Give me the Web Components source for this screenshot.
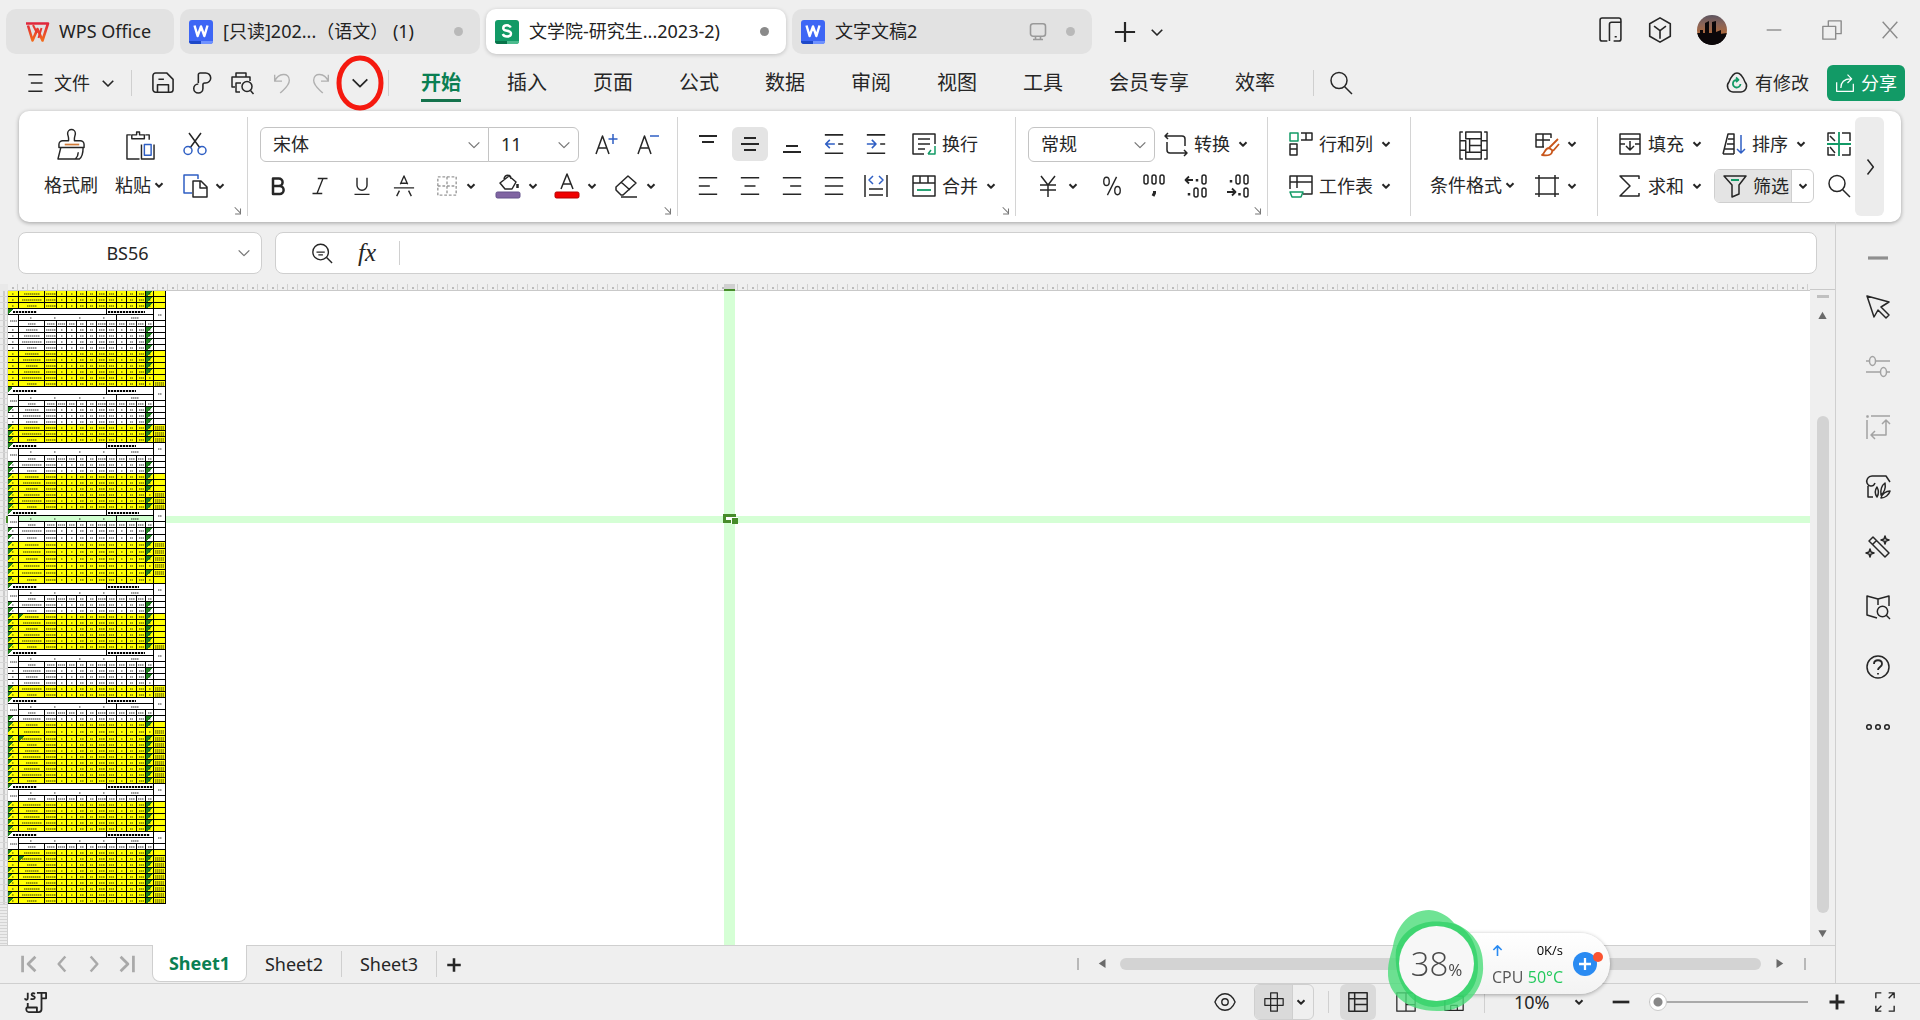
<!DOCTYPE html>
<html lang="zh-CN">
<head>
<meta charset="utf-8">
<title>WPS Office</title>
<style>
html,body{margin:0;height:100%}
body{font:18px/24px "Noto Sans","Noto Sans CJK SC",sans-serif;color:#262626;background:#efefef;overflow:hidden}
</style>
</head>
<body>
<wps-app></wps-app>
<script>
const BASE = `*{box-sizing:border-box}button,select,input{font:inherit;color:inherit;border:0;background:none;padding:0;margin:0;outline:0}button{cursor:pointer}select{appearance:none}`;
const define = (name, html, init) => {
  const tpl = document.createElement('template');
  customElements.define(name, class extends HTMLElement {
    connectedCallback() {
      if (this.shadowRoot) return;
      const root = this.attachShadow({ mode: 'open' });
      tpl.innerHTML = `<style>${BASE}</style>` + (typeof html === 'function' ? html(this) : html);
      root.append(tpl.content.cloneNode(true));
      if (init) init(this, root);
    }
  });
};

const B = '#2f5fc4', G = '#129a66';
const ICONS = {
  chev: '<path d="M6 9l6 6 6-6" stroke-width="3.4"/>',
  chevSoft: '<path d="M5 9l7 7 7-7" stroke-width="2.2"/>',
  chevThin: '<path d="M4 8l8 8 8-8" stroke-width="1.900"/>',
  chevRight: '<path d="M9 3l7 9-7 9" stroke-width="1.8"/>',
  logo: '<defs><linearGradient id="g" x2="0" y2="1"><stop stop-color="#e0263c"/><stop offset="1" stop-color="#f26a1b"/></linearGradient></defs><path d="M1 3.500H23L17.500 20.500L12.500 9L7.500 20.500L3 5.500" stroke="url(#g)" stroke-width="2.600"/><path d="M8 5L12 13M16.500 8L13.500 18" stroke="#e63a30" stroke-width="2"/>',
  word: '<rect width="24" height="24" rx="3" fill="#3d66f5" stroke="none"/><path d="M0 21h12v3H3a3 3 0 0 1-3-3z" fill="#1d48c9" stroke="none"/><path d="M12 21h12a3 3 0 0 1-3 3h-9z" fill="#6f92ff" stroke="none"/><path d="M5.500 5.500L8.600 16L12 6.500L15.400 16L18.500 5.500" stroke="#fff" stroke-width="2.400"/>',
  sheet: '<rect width="24" height="24" rx="3" fill="#129a66" stroke="none"/><path d="M0 21h12v3H3a3 3 0 0 1-3-3z" fill="#08744a" stroke="none"/><path d="M12 21h12a3 3 0 0 1-3 3h-9z" fill="#4cbb8e" stroke="none"/><path d="M15.800 7.500C15 5.800 13.500 5.300 12 5.300C9.800 5.300 8.200 6.400 8.200 8.200C8.200 12 16 9.500 16 13.500C16 15.400 14.200 16.500 12 16.500C10 16.500 8.400 15.700 7.800 14" stroke="#fff" stroke-width="2.400"/>',
  monitor: '<rect x="3" y="2" width="18" height="15" rx="3" stroke-width="1.900"/><path d="M9 17v3M15 17v3M6 21h12" stroke-width="1.900"/>',
  plus: '<path d="M12 1v22M1 12h22" stroke-width="2.400"/>',
  plusBold: '<path d="M12 3v18M3 12h18" stroke-width="3.400"/>',
  minusBold: '<path d="M2 12h20" stroke-width="3.200"/>',
  phone: '<path d="M9 23H4a2 2 0 0 1-2-2V3a2 2 0 0 1 2-2h16a2 2 0 0 1 2 2v2"/><path d="M11 23V7a2 2 0 0 1 2-2h9v16a2 2 0 0 1-2 2h-5M16 19h2"/>',
  cube: '<path d="M12 .8l9.500 5.500v11.400L12 23.200l-9.500-5.500V6.300zM12 20v-7.500M6.500 8.500l5.500 4 5.500-4"/>',
  min: '<path d="M4 12h16"/>',
  restore: '<path d="M2 8h14v14H2zM8 8V2h14v14h-6"/>',
  close: '<path d="M4 3l16 18M20 3L4 21"/>',
  burger: '<path d="M4 2h17M7 12h14M4 22h17" stroke-width="1.800"/>',
  save: '<path d="M8 22H4a3 3 0 0 1-3-3V4a3 3 0 0 1 3-3h12l7 7v11a3 3 0 0 1-3 3H6M6 22v-8h12v8M7 8h6" stroke-width="1.700"/>',
  link: '<path d="M8 12V3a2 2 0 0 1 2-2h6a5.500 5.500 0 0 1 0 11h-1a2 2 0 0 0-2 2v4a5 5 0 1 1-5-5" stroke-width="1.700"/>',
  print: '<path d="M6 6V2h10v4M5 16H2V6h18v4M11 12H6v9h4"/><circle cx="17" cy="15.500" r="5"/><path d="M20.500 19.500l3 3.500"/>',
  undo: '<path d="M4 3v7h8M4 10C8 1 20 0 20 9c0 6-5 9-10 14"/>',
  redo: '<path d="M20 3v7h-8M20 10C16 1 4 0 4 9c0 6 5 9 10 14"/>',
  search: '<circle cx="10" cy="9.500" r="8"/><path d="M15.500 15.500l7.500 7.500"/>',
  cloud: `<path d="M8 21a6 6 0 0 1-4-10C6 6 8 2 12 2s6 4 8 9a6 6 0 0 1-4 10z"/><path d="M15.500 13a3.800 3.800 0 1 1-3-4M11 6.500l2.500 2.300L11 11" stroke="${G}" stroke-width="1.800"/>`,
  share: '<path d="M2 11v11h20v-9M7 18c0-8 5-11 12-11M15 2l5 5-5 5"/>',
  brush: '<path d="M12 11C12.500 7 11 6 11 3.500a4 4 0 0 1 8 0C19 6 17.500 7 18 11h6a4 4 0 0 1 4 4v3H2v-3a4 4 0 0 1 4-4zM4 18L1 30h22c3-2 4-6 4-12M22 23c0 3-1 5-3 7" transform="translate(0 -1)"/><path d="M8 14h15" stroke="#d27b38" stroke-width="1.800"/>',
  paste: `<path d="M14 29H1V4h4M20 4h4v5M6 8V4h5V1h3v3h5v4z"/><path d="M16 14V29h13V14" /><path d="M19 14h7v11h-7z" stroke="${B}"/>`,
  cut: `<path d="M6 1l11 15M18 1L7 16"/><circle cx="5" cy="18.500" r="4" stroke="${B}"/><circle cx="19" cy="18.500" r="4" stroke="${B}"/>`,
  copy: `<path d="M9 19H1V1h14v4" stroke="${B}"/><path d="M10 7h8l6 6v10H10zM17 7v7h7"/>`,
  growA: `<path d="M2 22L8.500 4L15 22M4.500 16h8"/><path d="M19 2v10M14.500 7h9" stroke="${B}"/>`,
  shrinkA: `<path d="M2 22L8.500 4L15 22M4.500 16h8"/><path d="M14 4h9" stroke="${B}"/>`,
  bold: '<path d="M6 3h7a4.300 4.300 0 0 1 0 9H6zM6 12h8a4.500 4.500 0 0 1 0 9.500H6z" stroke-width="3"/>',
  italic: '<path d="M9 2h13M2 22h13M16 2L8 22" stroke-width="1.800"/>',
  under: '<path d="M6 2v9a6 6 0 0 0 12 0V2M3 22h18" stroke-width="1.700"/>',
  strike: '<path d="M1 14h22M8 10L12 1l4 9M7 17l-3 6M17 17l3 6M9 9h6"/>',
  borders: '<path d="M2 2h20v20H2zM12 2v20M2 12h20" stroke="#999" stroke-dasharray="3 2"/>',
  fill: '<path d="M4 9l9-7 7 6-4 7H9zM8 5C9 0 15 0 15 5"/><path d="M21.500 10v4" stroke-width="2.500"/><rect x="0" y="18" width="24" height="6" rx="1.500" fill="#8064a2" stroke="#62508a" stroke-width="1"/>',
  colorA: '<path d="M6 15L12 0L18 15M8 10h8"/><rect x="0" y="18" width="24" height="6" rx="1.500" fill="#f00000" stroke="#b50000" stroke-width="1"/>',
  eraser: '<path d="M2 13L14 2l8 7L9 21H7l-5-5zM7 8l9 8M7 23h16"/>',
  vTop: '<path d="M3 4h18M6 10h12" stroke-width="1.900"/>',
  vMid: '<path d="M6 6h12M3 12h18M6 18h12" stroke-width="1.800"/>',
  vBot: '<path d="M6 14h12M3 20h18" stroke-width="1.900"/>',
  outdent: `<path d="M1 1h22M1 23h22M17 12h6" stroke-width="1.900"/><path d="M13 12H2M7 7l-5 5 5 5" stroke="${B}" stroke-width="1.900"/>`,
  indent: `<path d="M1 1h22M1 23h22M17 12h6" stroke-width="1.900"/><path d="M1 12h11M7 7l5 5-5 5" stroke="${B}" stroke-width="1.900"/>`,
  aLeft: '<path d="M2 3h20M2 12h12M2 21h20" stroke-width="1.800"/>',
  aCenter: '<path d="M2 3h20M6 12h12M2 21h20" stroke-width="1.800"/>',
  aRight: '<path d="M2 3h20M10 12h12M2 21h20" stroke-width="1.800"/>',
  aJust: '<path d="M2 3h20M2 12h20M2 21h20" stroke-width="1.800"/>',
  distrib: `<path d="M1 1v22M23 1v22M5 15h14M5 21h14"/><path d="M9 2L5 6l4 4M15 2l4 4-4 4" stroke="${B}"/>`,
  wrap: `<path d="M12 22H1V2h22v10M6 7h12M6 12h12M6 17h7"/><path d="M23 14v8h-7M19 18l-3 4" stroke="${G}"/>`,
  merge: `<path d="M1 2h22v20H1zM1 9h22M8 2v7M16 2v7"/><path d="M5 16h14" stroke="${G}" stroke-width="1.800"/>`,
  convert: '<path d="M1 4h17a3 3 0 0 1 3 3v7M4 1L1 4l3 3M3 10v8a3 3 0 0 0 3 3h17M20 18l3 3-3 3"/>',
  yen: '<path d="M5 2l7 9 7-9M4 11h16M4 16h16M12 11v12"/>',
  percent: '<ellipse cx="6" cy="7" rx="3" ry="4.500"/><ellipse cx="18" cy="17" rx="3" ry="4.500"/><path d="M17 2L7 22"/>',
  thousand: '<rect x="2" y="1" width="4" height="9" rx="2"/><rect x="10" y="1" width="4" height="9" rx="2"/><rect x="18" y="1" width="4" height="9" rx="2"/><path d="M12.500 17v2l-1.500 3" stroke-width="3"/>',
  decAdd: '<path d="M9 6H2M5 2.500L1.500 6 5 9.500" stroke-width="1.800"/><path d="M13 5v2.500" stroke-width="2.500"/><rect x="18" y="1" width="4" height="9" rx="2"/><path d="M5 19v2.500" stroke-width="2.500"/><rect x="10" y="14" width="4" height="9" rx="2"/><rect x="18" y="14" width="4" height="9" rx="2"/>',
  decSub: '<path d="M5 6v2.500" stroke-width="2.500"/><rect x="10" y="1" width="4" height="9" rx="2"/><rect x="18" y="1" width="4" height="9" rx="2"/><path d="M1 18h8M6 14.500L9.500 18 6 21.500" stroke-width="1.800"/><path d="M13.500 19v2.500" stroke-width="2.500"/><rect x="18" y="14" width="4" height="9" rx="2"/>',
  rowcol: `<path d="M12 1h11v7H12M17 1v7M1 12h7v11H1zM1 17h7"/><path d="M1 1h8v8H1z" stroke="${G}"/>`,
  worksheet: `<path d="M1 15V2h22v18h-9M1 8h22M8 2v12"/><path d="M1 18h13l-2 5H3z" stroke="${G}"/>`,
  condfmt: '<path d="M4 1H1v28h3M26 1h3v28h-3M7 1v7h16V1zM7 29v-7h16v7zM11 8v14M23 8v14M11 15h12M1 10h6v12M1 20h6M23 10h6M23 20h6"/>',
  style: '<path d="M9 15H1V2h15v4M1 8h14M8 2v13"/><path d="M23 7l-9 9M24 12l-6 7M14 16c-4 0-4 5-7 7 6 1 11 0 10-5z" stroke="#c8561b" stroke-width="1.800"/>',
  frame: '<path d="M4 1v22M20 1v22M0 4h24M0 20h24"/>',
  fillDown: '<path d="M7 12H2V2h20v10h-5M2 7h20M2 12v10h20V12M12 9v9M8 14l4 4 4-4"/>',
  sort: `<path d="M1 22L6 2h6v20M3 17h9M5 12h7M6 7h6M1 22h11"/><path d="M19 3v18M15 17l4 4 4-4" stroke="${B}"/>`,
  sum: '<path d="M21 5V2H2l10 10L2 22h19v-3"/>',
  filter: `<path d="M1 2h22l-7 9v9l-7 3V11z"/><path d="M8 6h8" stroke="${G}" stroke-width="2"/>`,
  textcol: `<path d="M8 1H1v8M1 15v8h7M15 1h8v8M15 23h8v-8M3 4l5 5M3 15l5 6"/><path d="M0 12h24M12 0v24" stroke="${G}" stroke-width="1.800"/>`,
  launcher: '<path d="M4 3l14 14M18 6v13H5" stroke-width="2.500"/>',
  zoomfx: '<circle cx="10.500" cy="11" r="8.500"/><path d="M17 17l6 6M6 11h9M8 14h5"/>',
  cursor: '<path d="M1 1l22 6-8 5 8 8-3 3-8-8-4 7z"/>',
  sliders: '<path d="M0 6h3M10 6h14M0 17h14M21 17h3"/><ellipse cx="6.500" cy="6" rx="3" ry="4.500"/><ellipse cx="17.500" cy="17" rx="3" ry="4.500"/>',
  rotate: '<path d="M5 1h19M1 5v19M1 1h1v1H1zM20 6v14H6M16 9l4-4 4 4M9 16l-4 4 4 4"/>',
  leaf: '<path d="M24 7l-4-6H6C2 1 0 5 1 8s6 5 8 0M2 11v11h5M11 22c-3-4-2-7 0-10 2 4 2 7 0 10zM15 20c-1-5 1-10 4-12 1 5-1 10-4 12zM15 23c1-4 5-7 9-7-1 4-5 7-9 7z"/>',
  wand: '<path d="M3 6l4-4 16 16-4 4zM7 9l4-4M19 1l1 3 3 1-3 1-1 3-1-3-3-1 3-1zM4 14l1 3 3 1-3 1-1 3-1-3-3-1 3-1z"/>',
  book: '<path d="M11 23L1 20V1l11 3 11-3v10M12 4v6"/><circle cx="16.500" cy="16.500" r="5.200"/><path d="M20 20l4 4"/>',
  help: '<circle cx="12" cy="12" r="11"/><path d="M8 9c0-5 8-5 8 0 0 3-4 3-4 6M12 18v1.500" stroke-width="1.800"/>',
  dots: '<circle cx="3" cy="12" r="2.300"/><circle cx="12" cy="12" r="2.300"/><circle cx="21" cy="12" r="2.300"/>',
  navFirst: '<path d="M5 3v18M19 4l-8 8 8 8" stroke-width="3"/>',
  navPrev: '<path d="M16 3l-8 9 8 9" stroke-width="3"/>',
  navNext: '<path d="M8 3l8 9-8 9" stroke-width="3"/>',
  navLast: '<path d="M19 3v18M5 4l8 8-8 8" stroke-width="3"/>',
  triUp: '<path d="M12 2l11 19H1z" fill="currentColor" stroke="none"/>',
  triDown: '<path d="M12 22L1 3h22z" fill="currentColor" stroke="none"/>',
  triLeft: '<path d="M2 12L20 0v24z" fill="currentColor" stroke="none"/>',
  triRight: '<path d="M22 12L4 0v24z" fill="currentColor" stroke="none"/>',
  script: '<path d="M3 2v6c0 2-3 2-3 0M11 3C7 1 6 5 9 5.500S11 10 6 8.500M13 2h10v6h-5M18 2v18a3 3 0 0 1-3 3H4c-3 0-3-4-2-5h11v5M3 18v-5" stroke-width="2"/>',
  eye: '<path d="M1 12c5-12 17-12 22 0-5 12-17 12-22 0z"/><circle cx="12" cy="12" r="3.500"/>',
  cross: '<path d="M8 8V1h8v7h7v8h-7v7H8v-7H1V8zM8 8h8v8H8z"/>',
  grid: '<path d="M1 1h22v22H1zM1 8h22M8 1v22M8 15h15" stroke-width="1.800"/>',
  page: '<path d="M1 1h22v22H1zM12 1v22M12 15h11"/>',
  page2: '<path d="M1 5h22v17H1zM8 16h8v6M8 22v-6"/>',
  full: '<path d="M8 2H2v6M16 2h6v6M22 2l-6 6M8 22H2v-6M2 22l6-6M16 22h6v-6"/>',
  up: '<path d="M12 24V3M3 11l9-9 9 9" stroke-width="3.500"/>'
};
define('ui-icon', el => {
  const n = el.getAttribute('name'), s = el.getAttribute('size') || 24, v = el.getAttribute('box') || 24;
  return `<style>:host{display:block;flex:none;width:${s}px;height:${s}px}svg{display:block;overflow:visible}</style>
  <svg width="${s}" height="${s}" viewBox="0 0 ${v} ${v}" fill="none" stroke="currentColor" stroke-width="1.500" stroke-linejoin="round" aria-hidden="true">${ICONS[n]}</svg>`;
});

/* toolbar button: icon, optional label, optional drop-down arrow */
define('ui-tool', el => {
  const a = k => el.getAttribute(k);
  const label = a('label') || '', arrow = el.hasAttribute('menu') ? '<ui-icon name="chev" size="14"></ui-icon>' : '';
  const title = a('tip') || label;
  return `<style>
  :host{display:block;flex:none}
  button{display:flex;align-items:center;height:34px;gap:6px;border-radius:6px;white-space:nowrap;width:100%}
  :host([square]) button{justify-content:center;width:36px}
  :host([on]) button{background:#e4e4e4}
  :host([big]) button{flex-direction:column;height:76px;gap:10px;padding-top:4px}
  .row{display:flex;align-items:center;gap:1px;line-height:30px}
  </style><button title="${title}" aria-label="${title}">` + (el.hasAttribute('big')
    ? `<ui-icon name="${a('icon')}" size="29" box="30"></ui-icon><span class="row">${label}${arrow}</span>`
    : `<ui-icon name="${a('icon')}" size="${a('size') || 24}"></ui-icon>${label ? `<span>${label}</span>` : ''}${arrow}`) + `</button>`;
});

define('ui-select', el => `<style>
  :host{display:block;position:relative;height:35px;border:1px solid #c4c4c4;border-radius:6px;background:#fff}
  select{width:100%;height:100%;padding-left:12px;text-overflow:clip}
  ui-icon{position:absolute;right:6px;top:9px;pointer-events:none;color:#777}
  </style><select aria-label="${el.getAttribute('tip')}"><option>${el.getAttribute('value')}</option></select><ui-icon name="chevThin" size="16"></ui-icon>`);

define('doc-tab', el => `<style>
  :host{display:flex;align-items:center;gap:10px;height:45px;width:300px;padding:0 17px 0 9px;border-radius:10px;background:#e2e2e2;color:#222;flex:none}
  :host([home]){width:168px;padding-left:19px}
  :host([active]){background:#fff;box-shadow:0 1px 4px #0003}
  button{flex:1;text-align:left;white-space:nowrap;overflow:hidden;height:45px;padding-bottom:1px}
  i{width:9px;height:9px;border-radius:50%;background:#b9b9b9;margin-left:8px}
  :host([active]) i{background:#8a8a8a}
  :host([home]) i{display:none}
  ui-icon[name=monitor]{color:#999}
  </style><ui-icon name="${el.getAttribute('icon')}"></ui-icon><button role="tab"><slot></slot></button>${el.hasAttribute('screen') ? '<ui-icon name="monitor" size="20"></ui-icon>' : ''}<i></i>`);

define('title-bar', `<style>
  :host{display:flex;align-items:center;gap:6px;padding:9px 19px 0 6px}
  .new{display:flex;align-items:center;gap:12px;margin-left:16px}
  .win{margin-left:auto;display:flex;align-items:center;gap:36px}
  .app{display:flex;align-items:center;gap:24px;margin-bottom:4px}
  .win button{display:block}.sys{display:flex;gap:36px;color:#8b8b8b;margin-bottom:4px}
  .ava svg{display:block}
  </style>
  <doc-tab home icon="logo">WPS Office</doc-tab>
  <doc-tab icon="word">[只读]202...（语文） (1)</doc-tab>
  <doc-tab icon="sheet" active>文学院-研究生...2023-2)</doc-tab>
  <doc-tab icon="word" screen>文字文稿2</doc-tab>
  <div class="new"><button aria-label="新建"><ui-icon name="plus" size="22"></ui-icon></button><button aria-label="标签列表"><ui-icon name="chevSoft" size="18"></ui-icon></button></div>
  <div class="win"><div class="app">
  <button aria-label="手机"><ui-icon name="phone" size="25"></ui-icon></button>
  <button aria-label="应用"><ui-icon name="cube" size="26"></ui-icon></button>
  <button class="ava" aria-label="账户"><svg width="30" height="30" viewBox="0 0 30 30"><defs><linearGradient id="s" x2="0" y2="1"><stop stop-color="#5d5560"/><stop offset=".3" stop-color="#8a6458"/><stop offset=".6" stop-color="#a9683e"/><stop offset=".7" stop-color="#140c0c"/></linearGradient><clipPath id="c"><circle cx="15" cy="15" r="15"/></clipPath></defs><g clip-path="url(#c)"><rect width="30" height="30" fill="url(#s)"/><path d="M0 18h3v-3h3v3h2V8l4-2v12h3V7l4-1v11l5-2v4l6-1v12H0z" fill="#0b0709"/></g></svg></button></div>
  <div class="sys"><button aria-label="最小化"><ui-icon name="min" size="22"></ui-icon></button><button aria-label="还原"><ui-icon name="restore" size="22"></ui-icon></button><button aria-label="关闭"><ui-icon name="close" size="22"></ui-icon></button></div></div>`);

define('menu-bar', `<style>
  :host{display:flex;align-items:center;height:57px;padding:0 15px 0 25px}
  .file{display:flex;align-items:center;gap:9px}
  .sep{width:1px;height:26px;background:#cfcfcf;flex:none}
  .file + .sep{margin-left:14px}
  .quick{display:flex;align-items:center;gap:17px;margin:0 17px 0 20px}
  .quick button{display:block}
  .quick .dim{color:#b0b0b0}
  .more{position:relative}
  .more svg{position:absolute;left:-13px;top:-17px;pointer-events:none}
  nav{display:flex;gap:46px;margin:0 38px 0 32px;font-size:20px;line-height:30px}
  nav a{color:inherit;text-decoration:none;white-space:nowrap;padding:5px 0 4px;background:linear-gradient(#15734d,#15734d) 0 100%/0 3px no-repeat}
  nav a.on{color:#0a7f52;font-weight:700;background-size:100% 3px}
  .find{margin-left:15px}
  .right{margin-left:auto;display:flex;align-items:center;gap:18px}
  .right button{display:flex;align-items:center;gap:6px;white-space:nowrap}
  .right .share{height:36px;width:78px;background:#129a66;color:#fff;border-radius:6px;justify-content:center}
  </style>
  <button class="file"><ui-icon name="burger" size="20"></ui-icon><span>文件</span><ui-icon name="chevSoft" size="18"></ui-icon></button>
  <span class="sep"></span>
  <div class="quick">
  <button aria-label="保存"><ui-icon name="save" size="22"></ui-icon></button>
  <button aria-label="输出"><ui-icon name="link" size="22"></ui-icon></button>
  <button aria-label="打印预览"><ui-icon name="print" size="24"></ui-icon></button>
  <button class="dim" aria-label="撤销"><ui-icon name="undo" size="22"></ui-icon></button>
  <button class="dim" aria-label="恢复"><ui-icon name="redo" size="22"></ui-icon></button>
  <button class="more" aria-label="自定义快速访问"><ui-icon name="chevThin" size="22"></ui-icon><svg width="48" height="56"><ellipse cx="24" cy="28" rx="21" ry="25" fill="none" stroke="#f5190f" stroke-width="5"/></svg></button>
  </div>
  <span class="sep"></span>
  <nav><a href="#" class="on">开始</a><a href="#">插入</a><a href="#">页面</a><a href="#">公式</a><a href="#">数据</a><a href="#">审阅</a><a href="#">视图</a><a href="#">工具</a><a href="#">会员专享</a><a href="#">效率</a></nav>
  <span class="sep"></span><button class="find" aria-label="搜索"><ui-icon name="search"></ui-icon></button>
  <div class="right"><button><ui-icon name="cloud"></ui-icon>有修改</button><button class="share"><ui-icon name="share" size="20"></ui-icon>分享</button></div>`);

define('ribbon-group', el => `<style>
  :host{position:relative;display:flex;flex:none;padding:10px 0 13px 12px;margin:6px 0;height:99px;border-right:1px solid #d4d4d4}
  :host([last]){border:0;flex:1;overflow:hidden}
  .l{position:absolute;right:4px;bottom:0;color:#777}
  </style><slot></slot>${el.hasAttribute('launcher') ? '<button class="l" aria-label="更多设置"><ui-icon name="launcher" size="10"></ui-icon></button>' : ''}`);
define('ribbon-bar', `<style>
  :host{display:flex;margin:0 19px;height:111px;background:#fff;border-radius:10px;box-shadow:0 1px 4px #0005;padding-right:17px}
  .c{display:flex;flex-direction:column;gap:8px}.r{display:flex;align-items:center;height:34px}
  .g{gap:6px}
  .split{display:flex;border:1px solid #cfcfcf;border-radius:6px;width:100px;height:34px;align-items:center;overflow:hidden}
  .split ui-tool{background:#e4e4e4;border-right:1px solid #cfcfcf;padding-left:8px;width:77px}
  .split button{flex:1;display:flex;justify-content:center}
  .next{flex:none;width:29px;height:99px;margin-top:6px;background:#ececec;border-radius:6px;display:flex;align-items:center;justify-content:center}
  .font{width:229px;border-radius:6px 0 0 6px}.size{width:91px;border-radius:0 6px 6px 0;margin-left:-1px}
  </style>
  <ribbon-group launcher style="width:229px;padding-left:25px">
    <ui-tool big icon="brush" label="格式刷"></ui-tool>
    <ui-tool big menu icon="paste" label="粘贴" style="margin:0 17px"></ui-tool>
    <div class="c"><ui-tool icon="cut" tip="剪切"></ui-tool><ui-tool menu icon="copy" tip="复制"></ui-tool></div>
  </ribbon-group>
  <ribbon-group launcher style="width:430px">
    <div class="c"><div class="r"><ui-select class="font" tip="字体" value="宋体"></ui-select><ui-select class="size" tip="字号" value="11"></ui-select>
      <ui-tool square icon="growA" tip="增大字号" style="margin:0 6px 0 9px"></ui-tool><ui-tool square icon="shrinkA" tip="减小字号"></ui-tool></div>
    <div class="r"><ui-tool square icon="bold" size="20" tip="加粗"></ui-tool><ui-tool square icon="italic" size="18" tip="倾斜" style="margin:0 6px"></ui-tool><ui-tool square icon="under" size="20" tip="下划线"></ui-tool><ui-tool square icon="strike" size="22" tip="删除线" style="margin:0 14px 0 6px"></ui-tool>
      <ui-tool menu icon="borders" size="22" tip="边框" style="width:60px"></ui-tool><ui-tool menu icon="fill" tip="填充颜色" style="width:59px"></ui-tool><ui-tool menu icon="colorA" tip="字体颜色" style="width:59px"></ui-tool><ui-tool menu icon="eraser" tip="清除"></ui-tool></div></div>
  </ribbon-group>
  <ribbon-group launcher style="width:338px">
    <div class="c"><div class="r g"><ui-tool square icon="vTop" tip="顶端对齐"></ui-tool><ui-tool square on icon="vMid" tip="垂直居中"></ui-tool><ui-tool square icon="vBot" tip="底端对齐"></ui-tool><ui-tool square icon="outdent" size="20" tip="减少缩进"></ui-tool><ui-tool square icon="indent" size="20" tip="增加缩进"></ui-tool><ui-tool icon="wrap" label="换行" style="margin-left:12px"></ui-tool></div>
    <div class="r g"><ui-tool square icon="aLeft" size="22" tip="左对齐"></ui-tool><ui-tool square icon="aCenter" size="22" tip="居中"></ui-tool><ui-tool square icon="aRight" size="22" tip="右对齐"></ui-tool><ui-tool square icon="aJust" size="22" tip="两端对齐"></ui-tool><ui-tool square icon="distrib" tip="分散对齐"></ui-tool><ui-tool menu icon="merge" label="合并" style="margin-left:12px"></ui-tool></div></div>
  </ribbon-group>
  <ribbon-group launcher style="width:252px">
    <div class="c"><div class="r"><ui-select tip="数字格式" value="常规" style="width:127px;margin-right:9px"></ui-select><ui-tool menu icon="convert" label="转换"></ui-tool></div>
    <div class="r g"><ui-tool menu icon="yen" tip="货币" style="margin:0 8px"></ui-tool><ui-tool square icon="percent" size="22" tip="百分比"></ui-tool><ui-tool square icon="thousand" tip="千位分隔"></ui-tool><ui-tool square icon="decAdd" tip="增加小数"></ui-tool><ui-tool square icon="decSub" tip="减少小数"></ui-tool></div></div>
  </ribbon-group>
  <ribbon-group style="width:143px;padding-left:21px"><div class="c"><ui-tool menu icon="rowcol" label="行和列"></ui-tool><ui-tool menu icon="worksheet" label="工作表"></ui-tool></div></ribbon-group>
  <ribbon-group style="width:187px;padding-left:19px"><ui-tool big menu icon="condfmt" label="条件格式" style="margin-right:18px"></ui-tool><div class="c"><ui-tool menu icon="style" tip="表格样式"></ui-tool><ui-tool menu icon="frame" tip="单元格样式"></ui-tool></div></ribbon-group>
  <ribbon-group last style="padding-left:20px"><div class="c"><div class="r"><ui-tool menu icon="fillDown" label="填充" style="width:104px"></ui-tool><ui-tool menu icon="sort" label="排序" style="width:105px"></ui-tool><ui-tool icon="textcol" tip="分列"></ui-tool></div>
  <div class="r"><ui-tool menu icon="sum" label="求和" style="width:96px"></ui-tool><div class="split"><ui-tool icon="filter" label="筛选"></ui-tool><button aria-label="筛选选项"><ui-icon name="chev" size="14"></ui-icon></button></div><ui-tool icon="search" tip="查找" style="margin-left:13px"></ui-tool></div></div></ribbon-group>
  <button class="next" aria-label="向右滚动"><ui-icon name="chevRight" size="20"></ui-icon></button>`);

define('formula-bar', `<style>
  :host{display:flex;gap:13px;padding:10px 18px;height:62px}
  .b{display:flex;align-items:center;background:#fff;border:1px solid #cfcfcf;border-radius:8px;height:42px}
  .name{width:244px;padding-right:9px}
  .name input{flex:1;min-width:0;text-align:center}
  .name ui-icon{color:#777}
  .f{flex:1;padding-left:35px;gap:22px}.f input{flex:1}
  .fx{font:italic 25px/30px "Liberation Serif",serif;padding:0 1px 0 3px}
  .sep{width:1px;height:24px;background:#d0d0d0}
  </style><div class="b name"><input aria-label="名称框" value="BS56"><button aria-label="名称列表"><ui-icon name="chevThin" size="16"></ui-icon></button></div>
  <div class="b f"><button aria-label="浏览公式结果"><ui-icon name="zoomfx" size="22"></ui-icon></button><button class="fx">fx</button><span class="sep"></span><input aria-label="编辑栏"></div>`);

/* blocks of the mini table; capitals carry an error mark in the first column */
const BLOCKS = [
  { rows: 'yyy' },
  { rows: 'wwwwyyyyyy', h: [6, 6, 6], title: 37, noErr: [8, 9], note: [9] },
  { rows: 'WwwYYY', h: [8, 6, 6], title: 28, note: [3, 4, 5] },
  { rows: 'WWYYYYYY', h: [6, 7, 6], title: 28, noErr: [5], note: [5, 6, 7] },
  { rows: 'WWYYYYYY', h: [6, 6, 6], title: 31, rh: 7, sel: 1, noErr: [5, 7], note: [2, 3, 4, 5, 6] },
  { rows: 'WWYYYYYY', h: [6, 6, 6], title: 31, e1: 2, note: [7] },
  { rows: 'wwwYY', h: [6, 6, 6], title: 37, noErr: [2, 3, 4], note: [3, 4] },
  { rows: 'WYYYYYYYYYY', h: [6, 6, 6], title: 28, e1: 3, tall: 2, noErr: [2], note: [2, 3, 4, 5, 6, 7, 8, 9, 10] },
  { rows: 'YYYYY', h: [6, 6, 6], title: 45 },
  { rows: 'YYyYYYyYY', h: [6, 6, 6], title: 42, e1: 1, note: [1, 2, 3, 4, 5, 6, 7, 8] }
];
define('mini-table', () => {
  const W = [11, 26, 12, 10, 10, 10, 10, 10, 10, 10, 10, 9, 8, 12], M = [2, 14, 10, 2, 2, 4, 3, 6, 5, 2, 3, 5, 2, 0];
  const td = (w, c = '', attr = '') => `<td ${attr} class="${c}">${w ? `<i style="width:${w}px"></i>` : ''}</td>`;
  let out = '';
  for (const b of BLOCKS) {
    if (b.h) {
      out += `<tr style="height:${b.h[0]}px">${td(24, 't e', 'colspan="8"')}${td(b.title, 't u', 'colspan="5"')}${td(4, '', 'rowspan="2"')}</tr>`;
      out += `<tr style="height:${b.h[1]}px" class="${b.sel ? 'sel' : ''}">${td(7, 'w', 'rowspan="2"')}<td colspan="8"><p><i></i><i></i><i></i><i></i></p></td>${td(8, '', 'colspan="4"')}</tr>`;
      out += `<tr style="height:${b.h[2]}px">${[8, 8, 7, 6, 4, 4, 8, 6, 6, 6, 6, 4].map(w => td(w)).join('')}${td(0)}</tr>`;
    }
    [...b.rows].forEach((ch, r) => {
      const yellow = /y/i.test(ch), err = /[A-Z]/.test(ch), has = (k) => (b[k] || []).includes(r);
      const hgt = b.tall === r ? 8 : (b.rh || 6);
      out += `<tr class="${yellow ? 'y' : ''}" style="height:${hgt}px">` + M.map((m, c) => {
        const w = c === 1 ? m + [0, -4, 6, 2, -2, 4][(r * 5 + b.rows.length) % 6] : c === 13 ? (has('note') ? 9 : 0) : m;
        return td(w, (c === 0 && err || c === 1 && b.e1 === r ? 'e' : '') + (c === 12 && !has('noErr') ? 'E' : '') + (c === 13 ? ' n' : ''));
      }).join('') + '</tr>';
    });
  }
  return `<style>
  :host{display:block;width:158px}
  table{border-collapse:separate;border-spacing:0;table-layout:fixed;width:158px;font-size:0;line-height:0}
  td{padding:0;border:solid #000;border-width:0 1px 1px 0;background:#fff;vertical-align:middle}
  .y td{background-color:#ffff05}
  .sel td:not(.w){background-color:#cfffcf}
  i{display:block;height:2px;margin:auto;background:repeating-linear-gradient(90deg,#0006 0 1px,#0003 1px 2px)}
  .t i{margin:0 0 0 5px;background:repeating-linear-gradient(90deg,#000 0 2px,#0003 2px 3px)}
  .t.u i{margin-left:1px}.n i{height:4px}
  p{display:flex;justify-content:space-around;margin:0}p i{width:2px;margin:0}
  .e{background-image:linear-gradient(135deg,#1d801d 50%,transparent 50%);background-size:5px 5px;background-repeat:no-repeat}
  .E{background-image:linear-gradient(130deg,#1d801d 55%,transparent 55%);background-size:6px 6px;background-repeat:no-repeat}
  </style><table aria-label="课程表"><colgroup>${W.map(w => `<col style="width:${w}px">`).join('')}</colgroup><tbody>${out}</tbody></table>`;
});

define('sheet-grid', `<style>
  :host{display:grid;grid-template:7px 1fr / 8px 1fr 25px;min-height:0}
  .corner{background:#e9e9e9}
  .cols{position:relative;background:repeating-linear-gradient(90deg,transparent 0 4px,#bbb 4px 6px,transparent 6px 10px) 0 3px/auto 2px repeat-x,repeating-linear-gradient(90deg,transparent 0 9px,#d0d0d0 9px 10px),#efefef;border-bottom:1px solid #c9c9c9}
  .rows{background:repeating-linear-gradient(transparent 0 5px,#d6d6d6 5px 6px),linear-gradient(90deg,transparent 3px,#ccc 3px 5px,transparent 5px),#ececec;border-right:1px solid #d0d0d0;position:relative;display:flex;flex-direction:column}
  .rows::after{content:"";margin-top:613px;flex:1;background:repeating-linear-gradient(#d4d4d4 0 1px,#ececec 1px 3px)}
  .area{position:relative;background:#fff;overflow:hidden}
  .col,.row,.cell,.hd,.rh{position:absolute}
  .col{left:716px;top:0;bottom:0;width:11px;background:#d5ffd5}
  .row{top:225px;left:158px;right:0;height:7px;background:#d5ffd5}
  .cell{left:715px;top:223px;width:13px;height:9px;border:3px solid #478c2a;border-right-width:2px;background:#fff}
  .cell::after{content:"";position:absolute;right:-4px;bottom:-4px;width:6px;height:6px;background:#478c2a;border:solid #fff;border-width:1px 0 0 1px}
  .hd{left:716px;top:0;width:11px;height:7px;background:#d0d0d0;border-bottom:2px solid #478c2a}
  .rh{right:-1px;top:225px;width:2px;height:7px;background:#478c2a}
  .side{grid-column:3;grid-row:1/3;display:flex;flex-direction:column;align-items:center;color:#6a6a6a;border-top:1px solid #c9c9c9;margin-top:5px;padding:5px 0 7px}
  .side b{width:12px;height:3px;background:#c0c0c0;margin-bottom:13px;flex:none}
  .track{flex:1;width:12px;margin:8px 0 16px;display:flex;align-items:flex-end;padding-top:88px}
  .track div{width:12px;height:100%;border-radius:6px;background:#d3d3d3}
  mini-table{position:relative}
  </style><div class="corner"></div><div class="cols"><div class="hd"></div></div><div class="side"><b></b><ui-icon name="triUp" size="9"></ui-icon><div class="track"><div></div></div><ui-icon name="triDown" size="9"></ui-icon></div>
  <div class="rows"><div class="rh"></div></div><div class="area"><mini-table></mini-table><div class="row"></div><div class="col"></div><div class="cell"></div></div>`);

define('sheet-tabs', `<style>
  :host{display:flex;height:38px;border-top:1px solid #cfcfcf;padding:0 29px 0 18px;flex:none}
  .nav{display:flex;align-items:center;gap:12px;color:#a9a9a9;width:134px;padding-bottom:2px}
  .nav button{display:block}
  .tab{width:95px;height:36px;position:relative;white-space:nowrap}
  .tab.on{background:#fff;color:#0a7f52;font-weight:700;border-radius:0 0 8px 8px;margin-top:-1px;height:37px;border:solid #cfcfcf;border-width:0 1px 1px}
  .tab:not(.on){border-right:1px solid #cfcfcf;height:26px;margin-top:5px}
  .add{margin-left:8px}
  .h{margin-left:auto;width:729px;display:flex;align-items:center;color:#6a6a6a;padding-bottom:2px}
  .h s{width:2px;height:12px;background:#b8b8b8}
  .h div{flex:1;height:12px;border-radius:6px;background:#d3d3d3;margin:0 14px 0 13px}
  .h ui-icon:first-of-type{margin-left:19px}.h s:last-child{margin-left:20px}
  </style><div class="nav"><button aria-label="首个"><ui-icon name="navFirst" size="22"></ui-icon></button><button aria-label="上一个"><ui-icon name="navPrev" size="20"></ui-icon></button><button aria-label="下一个"><ui-icon name="navNext" size="20"></ui-icon></button><button aria-label="末个"><ui-icon name="navLast" size="22"></ui-icon></button></div>
  <button class="tab on">Sheet1</button><button class="tab">Sheet2</button><button class="tab">Sheet3</button><button class="add" aria-label="新建工作表"><ui-icon name="plusBold" size="18"></ui-icon></button>
  <div class="h"><s></s><ui-icon name="triLeft" size="9"></ui-icon><div></div><ui-icon name="triRight" size="9"></ui-icon><s></s></div>`);

define('side-panel', `<style>
  :host{display:flex;flex-direction:column;align-items:center;width:84px;padding-top:24px;gap:36px;flex:none}
  button{display:block}.d{color:#a3a3a3}
  button:first-of-type{margin-bottom:-11px;color:#8f8f8f}
  </style>` + [['minusBold', '收起', 'd'], ['cursor', '选择', ''], ['sliders', '属性', 'd'], ['rotate', '旋转', 'd'], ['leaf', '图库', ''], ['wand', '智能', ''], ['book', '词典', ''], ['help', '帮助', ''], ['dots', '更多', '']].map(([n, t, c]) => `<button class="${c}" aria-label="${t}"><ui-icon name="${n}"></ui-icon></button>`).join(''));

define('status-bar', `<style>
  :host{display:flex;align-items:center;height:37px;border-top:1px solid #cfcfcf;padding:0 24px 0 25px;flex:none}
  button{display:block}
  .r{margin-left:auto;display:flex;align-items:center}
  .g{display:flex;width:60px;height:36px;border:1px solid #cfcfcf;border-radius:6px;overflow:hidden;margin:0 14px 0 18px}
  .g button{display:flex;align-items:center;justify-content:center;flex:1}.g button:first-child{background:#dadada;flex:none;width:38px;border-right:1px solid #cfcfcf}
  .g button:first-child + button{margin-right:4px}
  .sep{width:1px;height:22px;background:#d0d0d0}
  .on{width:36px;height:36px;border-radius:6px;background:#dadada;display:flex;align-items:center;justify-content:center;margin:0 20px 0 11px}
  .v{margin:0 20px 0 28px}
  .z{position:relative;width:72px;margin:0 25px 0 29px}.z select{width:100%;display:block}.z ui-icon{position:absolute;right:0;top:5px;pointer-events:none}
  input{appearance:none;width:159px;height:20px;margin:0 19px 0 18px;background:linear-gradient(#aaa,#aaa) 0 50%/100% 2px no-repeat}
  input::-webkit-slider-thumb{appearance:none;width:18px;height:18px;border-radius:50%;background:radial-gradient(#888 0 4px,#fff 5px);border:1px solid #ccc}
  .full{margin-left:27px}
  </style><button aria-label="JS 宏"><ui-icon name="script" size="22"></ui-icon></button>
  <div class="r"><button aria-label="护眼模式"><ui-icon name="eye" size="22"></ui-icon></button>
  <div class="g"><button aria-label="阅读模式"><ui-icon name="cross" size="20"></ui-icon></button><button aria-label="阅读选项"><ui-icon name="chev" size="14"></ui-icon></button></div><span class="sep"></span>
  <button class="on" aria-label="普通视图"><ui-icon name="grid" size="20"></ui-icon></button><button aria-label="分页预览"><ui-icon name="page" size="20"></ui-icon></button><button class="v" aria-label="页面布局"><ui-icon name="page2" size="20"></ui-icon></button><span class="sep"></span>
  <div class="z"><select aria-label="显示比例"><option>10%</option></select><ui-icon name="chev" size="14"></ui-icon></div>
  <button aria-label="缩小"><ui-icon name="minusBold" size="20"></ui-icon></button><input type="range" min="0" max="100" value="0" aria-label="缩放"><button aria-label="放大"><ui-icon name="plusBold" size="20"></ui-icon></button>
  <button class="full" aria-label="全屏"><ui-icon name="full" size="22"></ui-icon></button></div>`);

define('perf-ball', `<style>
  :host{position:fixed;right:310px;bottom:5px;width:224px;height:106px;display:block}
  .pill{position:absolute;right:0;top:24px;left:50px;height:61px;border-radius:31px;background:linear-gradient(#fff,#f3f3f3);box-shadow:0 1px 4px #0005;display:flex;align-items:center;padding:0 13px 0 56px;gap:10px}
  .txt{flex:1;font:16px/27px "Open Sans","Noto Sans",sans-serif}
  .txt div{display:flex;justify-content:space-between;align-items:center;white-space:nowrap}
  .net{font-size:13px;color:#000}.net ui-icon{color:#2a8bf2}
  .cpu{color:#555}.cpu b{font-weight:400;color:#22c95c}
  .add{position:relative;display:flex;width:24px;height:24px;border-radius:50%;background:#2a8bf2;color:#fff;align-items:center;justify-content:center}
  .add i{position:absolute;right:-6px;top:0;width:10px;height:10px;border-radius:50%;background:#fb5330}
  .blob{position:absolute;left:1px;top:1px}
  .num{position:absolute;left:13px;top:17px;width:75px;height:75px;border-radius:50%;background:#f7f7f7;display:flex;align-items:baseline;justify-content:center;color:#4a4a4a;font:300 33px/75px "Open Sans","Noto Sans",sans-serif}
  .num small{font-size:17px;font-weight:400}
  </style><div class="pill"><div class="txt"><div class="net"><ui-icon name="up" size="11"></ui-icon><span>0K/s</span></div><div class="cpu"><span>CPU</span><b>50°C</b></div></div><button class="add" aria-label="加速"><ui-icon name="plusBold" size="16"></ui-icon><i></i></button></div>
  <svg class="blob" width="100" height="106" viewBox="0 0 100 106"><path d="M6 36C10 14 24 0 42 0C54 1 62 7 67 13C84 20 96 34 96 54C98 80 78 103 50 101C20 101 0 84 1 62C1 52 4 44 6 36z" fill="#4bdc79" opacity=".8"/><path d="M9 40C14 20 34 9 56 12C80 12 92 34 91 58C90 84 72 96 46 97C22 96 6 70 9 40z" fill="#2fd066" opacity=".75"/></svg>
  <div class="num"><span>38</span><small>%</small></div>`);

define('wps-app', `<style>
  :host{display:flex;flex-direction:column;height:100vh;position:relative}
  .body{display:flex;flex:1;min-height:0}
  main{flex:1;min-width:0;display:flex;flex-direction:column;border-right:1px solid #cfcfcf}
  sheet-grid{flex:1}
  </style><title-bar></title-bar><menu-bar></menu-bar><ribbon-bar></ribbon-bar>
  <div class="body"><main><formula-bar></formula-bar><sheet-grid></sheet-grid><sheet-tabs></sheet-tabs></main><side-panel></side-panel></div>
  <status-bar></status-bar><perf-ball></perf-ball>`);
</script>
</body>
</html>
